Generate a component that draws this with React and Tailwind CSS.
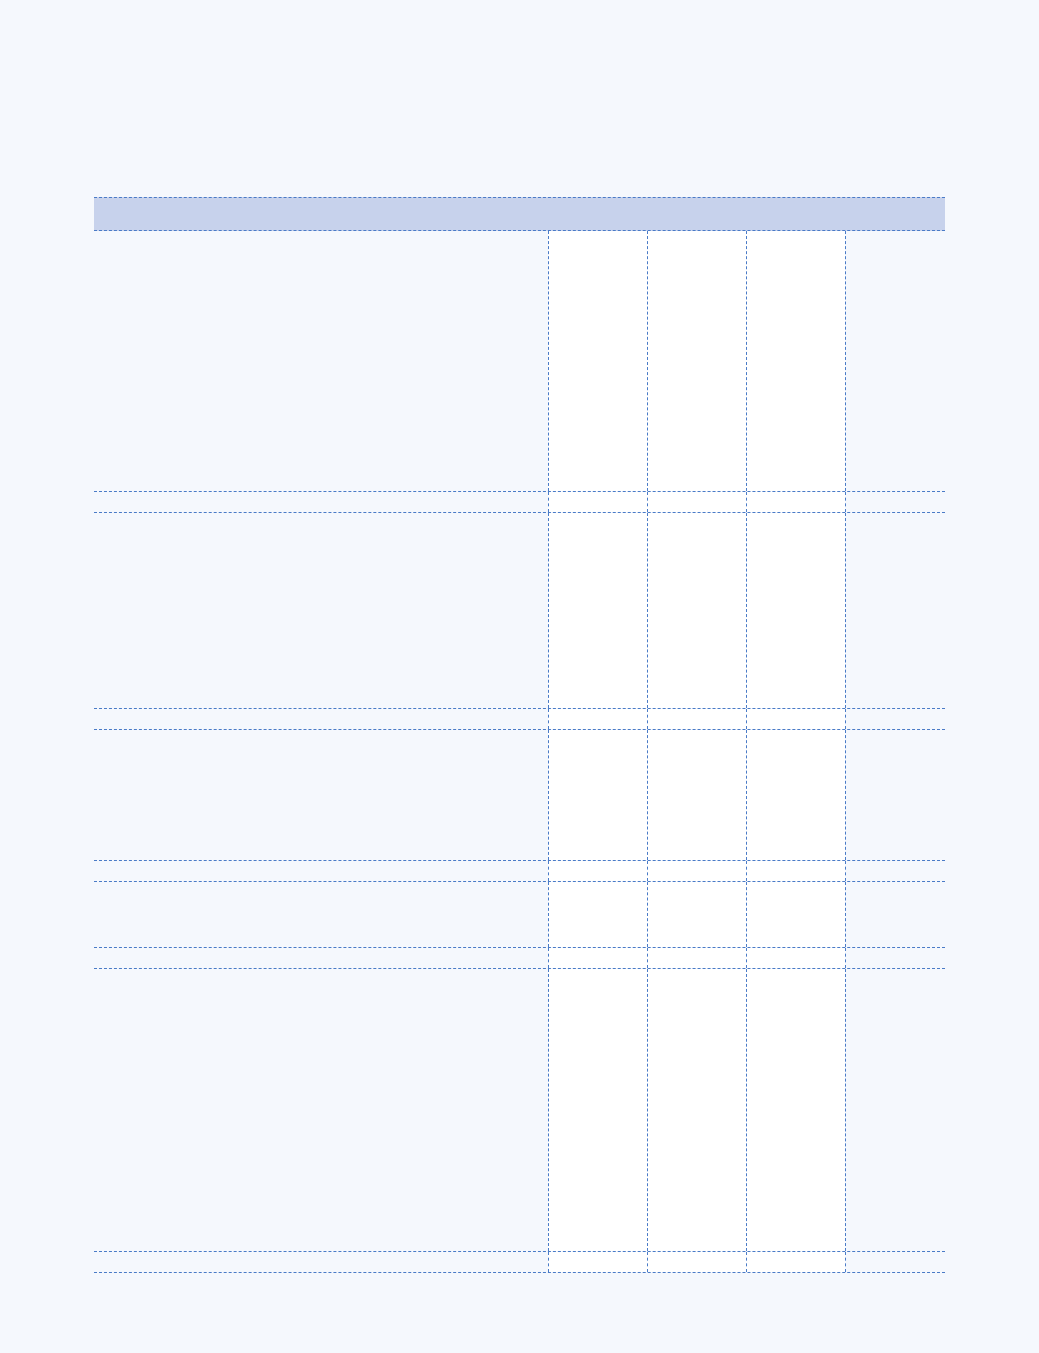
import React from "react";

const rows = [260, 20, 195, 20, 130, 20, 65, 20, 282, 20];

function Row({ height }) {
  return (
    <div className="flex border-b border-dashed border-[#4a7bc7]" style={{ height: height + 1 }}>
      <div className="w-[454px]"></div>
      <div className="w-[99px] bg-white border-l border-dashed border-[#4a7bc7]"></div>
      <div className="w-[99px] bg-white border-l border-dashed border-[#4a7bc7]"></div>
      <div className="w-[99px] bg-white border-l border-dashed border-[#4a7bc7]"></div>
      <div className="w-[100px] border-l border-dashed border-[#4a7bc7]"></div>
    </div>
  );
}

export default function App() {
  return (
    <div className="min-h-screen bg-[#f5f8fd] pt-[197px] pb-20 font-['Liberation_Sans',sans-serif]">
      <div className="mx-auto w-[851px]">
        <div className="h-[34px] bg-[#c7d2ec] border-y border-dashed border-[#4a7bc7]"></div>
        {rows.map(function (h, i) {
          return <Row key={i} height={h} />;
        })}
      </div>
    </div>
  );
}
